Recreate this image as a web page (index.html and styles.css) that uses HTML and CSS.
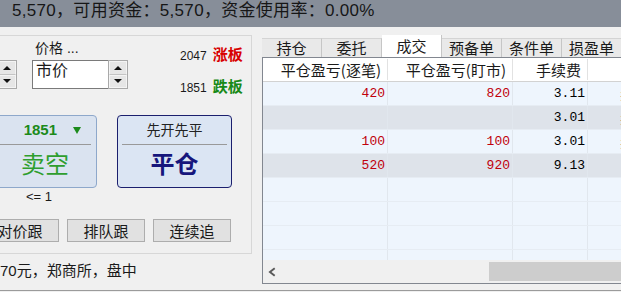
FILE: index.html
```html
<!DOCTYPE html>
<html lang="zh-CN">
<head>
    <meta charset="UTF-8">
    <meta name="viewport" content="width=device-width, initial-scale=1.0">
    <title>交易下单</title>
    <link rel="stylesheet" href="styles.css">
</head>
<body>

    <div class="status-bar">5,570，可用资金：5,570，资金使用率：0.00%</div>

    <div class="main">
        <div class="left">
            <div class="group">
                <div class="order-row">
                    <div class="spin spin-qty"><span class="up"></span><span class="down"></span></div>
                    <div class="price">
                        <div class="price-label">价格 ...</div>
                        <div class="combo">
                            <div class="combo-text">市价</div>
                            <div class="spin"><span class="up"></span><span class="down"></span></div>
                        </div>
                    </div>
                    <div class="limits">
                        <div class="limit"><span class="num">2047</span><span class="up-limit">涨板</span></div>
                        <div class="limit"><span class="num">1851</span><span class="down-limit">跌板</span></div>
                    </div>
                </div>

                <div class="action-row">
                    <div class="action sell">
                        <div class="action-top">1851<span class="tri"></span></div>
                        <div class="action-main">卖空</div>
                    </div>
                    <div class="action close">
                        <div class="action-top">先开先平</div>
                        <div class="action-main">平仓</div>
                    </div>
                </div>

                <div class="qty-hint">&lt;= 1</div>

                <div class="follow-row">
                    <button class="follow">对价跟</button>
                    <button class="follow">排队跟</button>
                    <button class="follow">连续追</button>
                </div>
            </div>
            <div class="summary">70元，郑商所，盘中</div>
        </div>

        <div class="right">
            <div class="tabs">
                <div class="tab">持仓</div>
                <div class="tab">委托</div>
                <div class="tab active">成交</div>
                <div class="tab">预备单</div>
                <div class="tab">条件单</div>
                <div class="tab">损盈单</div>
            </div>
            <div class="grid">
                <div class="grid-head">
                    <div class="cell c1">平仓盈亏(逐笔)</div>
                    <div class="cell c2">平仓盈亏(盯市)</div>
                    <div class="cell c3">手续费</div>
                    <div class="cell c4"></div>
                </div>
                <div class="grid-body">
                    <div class="row">
                        <div class="cell c1 loss">420</div>
                        <div class="cell c2 loss">820</div>
                        <div class="cell c3">3.11</div>
                        <div class="cell c4">卖</div>
                    </div>
                    <div class="row alt">
                        <div class="cell c1"></div>
                        <div class="cell c2"></div>
                        <div class="cell c3">3.01</div>
                        <div class="cell c4">卖</div>
                    </div>
                    <div class="row">
                        <div class="cell c1 loss">100</div>
                        <div class="cell c2 loss">100</div>
                        <div class="cell c3">3.01</div>
                        <div class="cell c4">卖</div>
                    </div>
                    <div class="row alt">
                        <div class="cell c1 loss">520</div>
                        <div class="cell c2 loss">920</div>
                        <div class="cell c3">9.13</div>
                        <div class="cell c4"></div>
                    </div>
                    <div class="row"><div class="cell c1"></div><div class="cell c2"></div><div class="cell c3"></div><div class="cell c4"></div></div>
                    <div class="row"><div class="cell c1"></div><div class="cell c2"></div><div class="cell c3"></div><div class="cell c4"></div></div>
                    <div class="row"><div class="cell c1"></div><div class="cell c2"></div><div class="cell c3"></div><div class="cell c4"></div></div>
                    <div class="row"><div class="cell c1"></div><div class="cell c2"></div><div class="cell c3"></div><div class="cell c4"></div></div>
                </div>
                <div class="hscroll">
                    <svg class="arrow" width="9" height="10" viewBox="0 0 9 10"><path d="M7 1 L2 5 L7 9" fill="none" stroke="#5a5a5a" stroke-width="2"/></svg>
                    <div class="thumb"></div>
                </div>
            </div>
        </div>
    </div>

    <div class="bottom-line"></div>

</body>
</html>
```

FILE: styles.css
```css
body { margin: 0; width: 621px; height: 292px; overflow: hidden; background: #f0f0f0; font-family: "Liberation Sans", "Noto Sans CJK SC", sans-serif; color: #1a1a1a; }

.status-bar { height: 27px; box-sizing: border-box; padding: 1px 0 0 12px; background: #878e99; font-size: 17px; line-height: 20px; letter-spacing: 0.3px; color: #161616; white-space: nowrap; }

.main { display: flex; align-items: flex-start; height: 263px; }

/* left order panel */
.left { width: 252px; flex: none; }
.group { width: 252px; height: 219px; margin-top: 8px; box-sizing: border-box; border: 1px solid #d7d7d7; border-left: none; overflow: hidden; }

.order-row { display: flex; height: 57px; }
.spin { display: flex; flex-direction: column; width: 20px; height: 29px; box-sizing: border-box; border: 1px solid #a9a9a9; background: #e6e6e6; }
.spin span { flex: 1; display: flex; align-items: center; justify-content: center; border: 1px solid #f4f4f4; }
.spin .up { border-bottom-color: #c4c4c4; }
.spin .up::before { content: ""; border-left: 4px solid transparent; border-right: 4px solid transparent; border-bottom: 4px solid #111; }
.spin .down::before { content: ""; border-left: 4px solid transparent; border-right: 4px solid transparent; border-top: 4px solid #111; }
.spin-qty { margin: 24px 0 0 -3px; }

.price { margin-left: 15px; width: 96px; }
.price-label { height: 24px; line-height: 24px; font-size: 14px; padding-left: 3px; }
.combo { display: flex; }
.combo-text { width: 76px; height: 29px; box-sizing: border-box; border: 1px solid #7a7a7a; border-right: none; background: #fff; font-size: 16px; line-height: 20px; padding-left: 3px; }

.limits { margin-left: 52px; padding-top: 11px; }
.limit { height: 16px; line-height: 16px; margin-bottom: 16px; white-space: nowrap; }
.limit .num { font-size: 12px; margin-right: 6px; }
.up-limit { font-size: 15px; font-weight: bold; color: #d80000; }
.down-limit { font-size: 15px; font-weight: bold; color: #178a17; }

.action-row { display: flex; margin-top: 22px; }
.action { height: 73px; box-sizing: border-box; border: 1px solid; border-radius: 4px; }
.action-top { height: 28px; line-height: 28px; border-bottom: 1px solid #999; }
.action-main { height: 42px; line-height: 40px; font-size: 24px; text-align: center; }
.sell { width: 110px; margin-left: -13px; background: #dae3f0; border-color: #8ea8cb; }
.sell .action-top { margin: 0 5px 0 12px; text-align: right; padding-right: 10px; font-size: 15px; font-weight: bold; color: #1b8a1b; }
.sell .tri { display: inline-block; margin-left: 16px; border-left: 4px solid transparent; border-right: 4px solid transparent; border-top: 7px solid #1b8a1b; vertical-align: 1px; }
.sell .action-main { color: #2e9e2e; padding-left: 6px; }
.close { width: 115px; margin-left: 20px; background: #dbe5f3; border-color: #1b1f6e; }
.close .action-top { margin: 0 4px; text-align: center; font-size: 14px; color: #222; }
.close .action-main { color: #16167c; font-weight: bold; }

.qty-hint { width: 110px; margin-left: -16px; height: 17px; line-height: 17px; font-size: 13px; text-align: center; }

.follow-row { display: flex; gap: 8px; margin: 14px 0 0 -19px; }
.follow { width: 78px; height: 23px; padding: 0; border: 1px solid #adadad; background: #e1e1e1; font-family: "Noto Sans CJK SC", sans-serif; font-size: 15px; line-height: 20px; color: #1a1a1a; }

.summary { margin-top: 8px; height: 18px; line-height: 18px; font-size: 15px; white-space: nowrap; }

/* right records panel */
.right { width: 380px; flex: none; margin: 8px 0 0 10px; }
.tabs { display: flex; align-items: flex-end; height: 22px; }
.tab { width: 60px; height: 19px; box-sizing: border-box; border-top: 1px solid #d4d4d4; border-right: 1px solid #c6c6c6; background: #e9e9e9; font-family: "Noto Sans CJK SC", sans-serif; font-size: 15px; line-height: 18px; text-align: center; }
.tab.active { height: 22px; line-height: 22px; background: #fff; border-top: none; }

.grid { height: 227px; box-sizing: border-box; border: 1px solid #828790; border-right: none; overflow: hidden; }
.grid-head, .row { display: flex; height: 24px; box-sizing: border-box; }
.grid-head { background: #fff; border-bottom: 1px solid #d2d2d2; }
.cell { flex: none; box-sizing: border-box; text-align: right; white-space: nowrap; overflow: hidden; }
.c1, .c2 { width: 125px; }
.c3 { width: 75px; }
.c4 { width: 80px; text-align: left; }
.grid-head .cell { font-family: "Noto Sans CJK SC", sans-serif; font-size: 15px; line-height: 22px; padding-right: 6px; border-right: 1px solid #e2e2e2; margin: 1px 0; }

.grid-body { height: 178px; overflow: hidden; }
.row { background: #eef5fd; border-bottom: 1px solid #e6ecf3; }
.row.alt { background: #dee3ea; }
.row .cell { font-family: "Liberation Mono", monospace; font-size: 13px; line-height: 23px; padding-right: 2px; border-right: 1px solid #e1e7ee; color: #000; }
.row .cell.loss { color: #c0000c; }
.row .c4 { padding-left: 32px; font-family: "Noto Sans CJK SC", sans-serif; }

.hscroll { display: flex; align-items: center; height: 23px; background: #f0f0f0; }
.hscroll .arrow { margin-left: 5px; }
.hscroll .thumb { margin-left: 212px; width: 160px; height: 19px; background: #cdcdcd; }

.bottom-line { height: 2px; border-top: 1px solid #9b9b9b; }
```
